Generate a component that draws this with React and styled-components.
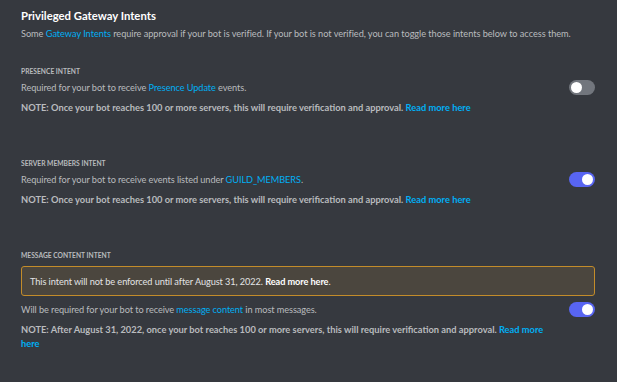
import React from "react";
import styled, { createGlobalStyle } from "styled-components";

const Global = createGlobalStyle`
  html, body { margin: 0; padding: 0; background: #36393f; }
  body { font-family: "Lato", "Noto Sans", sans-serif; -webkit-font-smoothing: antialiased; }
`;

const Page = styled.div`
  width: 617px;
  height: 382px;
  box-sizing: border-box;
  padding: 8px 22px 0 21px;
  background: #36393f;
  overflow: hidden;
`;

const Title = styled.h2`
  margin: 0;
  font-size: 11.3px;
  line-height: 16px;
  font-weight: 700;
  color: #ffffff;
`;

const Desc = styled.p`
  margin: 4px 0 0;
  font-size: 9.2px;
  line-height: 12px;
  letter-spacing: -0.04px;
  color: #b9bbbe;
  white-space: nowrap;
`;

const Section = styled.section`
  margin-top: ${(p) => p.$top}px;
  display: flex;
  flex-direction: column;
`;

const Heading = styled.h3`
  margin: 0;
  font-size: 6.7px;
  line-height: 10px;
  font-weight: 700;
  text-transform: uppercase;
  color: #b9bbbe;
`;

const Row = styled.div`
  margin-top: ${(p) => p.$top}px;
  display: flex;
  align-items: center;
  justify-content: space-between;
  height: 15px;
`;

const RowText = styled.span`
  font-size: 9.2px;
  line-height: 12px;
  letter-spacing: -0.08px;
  color: #b9bbbe;
`;

const Link = styled.a`
  color: #00aff4;
  text-decoration: none;
  font-weight: inherit;
`;

const Note = styled.p`
  margin: 6px 0 0;
  font-size: 9.3px;
  line-height: 14px;
  font-weight: 700;
  color: #b9bbbe;
  padding-right: 36px;
`;

const Switch = styled.div`
  flex: none;
  width: 26px;
  height: 15px;
  border-radius: 8px;
  background: ${(p) => (p.$on ? "#5865f2" : "#72767d")};
  display: flex;
  align-items: center;
  justify-content: ${(p) => (p.$on ? "flex-end" : "flex-start")};
  padding: 0 2px;
  box-sizing: border-box;
`;

const Knob = styled.span`
  width: 11px;
  height: 11px;
  border-radius: 50%;
  background: #ffffff;
`;

const Warning = styled.div`
  margin-top: 6px;
  height: 30px;
  box-sizing: border-box;
  border: 1px solid #c38c2a;
  border-radius: 3px;
  background: #4b463e;
  display: flex;
  align-items: center;
  padding: 0 8px;
  font-size: 9.2px;
  letter-spacing: -0.08px;
  color: #e3e4e5;
`;

const Strong = styled.strong`
  color: #ffffff;
  font-weight: 700;
`;

const Toggle = ({ on }) => (
  <Switch $on={on}>
    <Knob />
  </Switch>
);

export default function App() {
  return (
    <>
      <Global />
      <Page>
        <Title>Privileged Gateway Intents</Title>
        <Desc>
          Some <Link>Gateway Intents</Link> require approval if your bot is verified. If your bot is not verified, you can toggle those intents below to access them.
        </Desc>

        <Section $top={26}>
          <Heading>Presence Intent</Heading>
          <Row $top={4}>
            <RowText>
              Required for your bot to receive <Link>Presence Update</Link> events.
            </RowText>
            <Toggle on={false} />
          </Row>
          <Note>
            NOTE: Once your bot reaches 100 or more servers, this will require verification and approval. <Link>Read more here</Link>
          </Note>
        </Section>

        <Section $top={43}>
          <Heading>Server Members Intent</Heading>
          <Row $top={4}>
            <RowText>
              Required for your bot to receive events listed under <Link>GUILD_MEMBERS</Link>.
            </RowText>
            <Toggle on />
          </Row>
          <Note>
            NOTE: Once your bot reaches 100 or more servers, this will require verification and approval. <Link>Read more here</Link>
          </Note>
        </Section>

        <Section $top={43}>
          <Heading>Message Content Intent</Heading>
          <Warning>
            <span>
              This intent will not be enforced until after August 31, 2022. <Strong>Read more here</Strong>.
            </span>
          </Warning>
          <Row $top={6}>
            <RowText>
              Will be required for your bot to receive <Link>message content</Link> in most messages.
            </RowText>
            <Toggle on />
          </Row>
          <Note>
            NOTE: After August 31, 2022, once your bot reaches 100 or more servers, this will require verification and approval. <Link>Read more here</Link>
          </Note>
        </Section>
      </Page>
    </>
  );
}
